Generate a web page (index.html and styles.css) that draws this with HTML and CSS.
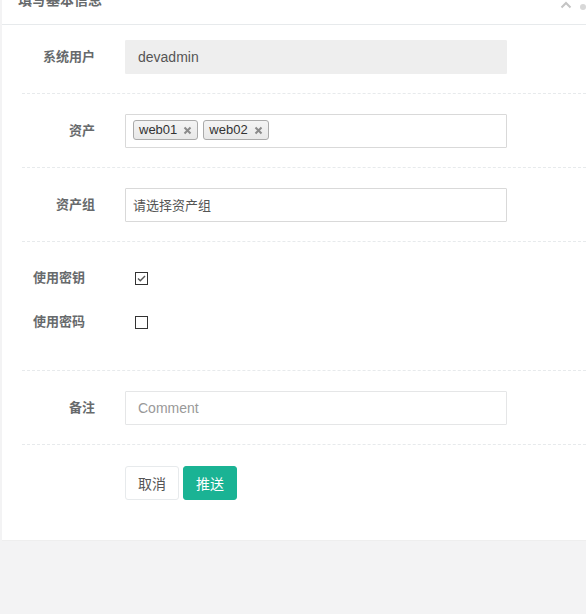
FILE: index.html
```html
<!DOCTYPE html>
<html lang="zh">
<head>
<meta charset="utf-8">
<title>填写基本信息</title>
<link rel="stylesheet" href="styles.css">
</head>
<body>
<div class="ibox">
  <div class="ibox-title">
    <h5>填写基本信息</h5>
    <div class="tools">
      <svg class="chev" width="12" height="8" viewBox="0 0 12 8"><path d="M1.5 6.5 L6 2 L10.5 6.5" fill="none" stroke="#c4c4c4" stroke-width="2"/></svg>
      <span class="wrench"></span>
    </div>
  </div>
  <div class="ibox-content">
    <div class="group">
      <label class="lbl">系统用户</label>
      <div class="ctl"><div class="input disabled">devadmin</div></div>
    </div>
    <div class="hr"></div>
    <div class="group">
      <label class="lbl">资产</label>
      <div class="ctl">
        <div class="input multi">
          <span class="tag">web01<svg class="x" width="9" height="9" viewBox="0 0 9 9"><path d="M1.5 1.5 L7.5 7.5 M7.5 1.5 L1.5 7.5" stroke="#8a8a8a" stroke-width="2"/></svg></span>
          <span class="tag">web02<svg class="x" width="9" height="9" viewBox="0 0 9 9"><path d="M1.5 1.5 L7.5 7.5 M7.5 1.5 L1.5 7.5" stroke="#8a8a8a" stroke-width="2"/></svg></span>
        </div>
      </div>
    </div>
    <div class="hr"></div>
    <div class="group">
      <label class="lbl">资产组</label>
      <div class="ctl"><div class="input select">请选择资产组</div></div>
    </div>
    <div class="hr"></div>
    <div class="checks">
      <div class="check-row">
        <label class="clbl">使用密钥</label>
        <svg class="cb" width="13" height="13" viewBox="0 0 13 13"><rect x="0.5" y="0.5" width="12" height="12" fill="#fff" stroke="#333"/><path d="M3 6.5 L5.3 8.8 L10 4" fill="none" stroke="#555" stroke-width="1.4"/></svg>
      </div>
      <div class="check-row">
        <label class="clbl">使用密码</label>
        <svg class="cb" width="13" height="13" viewBox="0 0 13 13"><rect x="0.5" y="0.5" width="12" height="12" fill="#fff" stroke="#333"/></svg>
      </div>
    </div>
    <div class="hr"></div>
    <div class="group">
      <label class="lbl">备注</label>
      <div class="ctl"><div class="input placeholder">Comment</div></div>
    </div>
    <div class="hr"></div>
    <div class="buttons">
      <button class="btn btn-white" type="button">取消</button>
      <button class="btn btn-primary" type="button">推送</button>
    </div>
  </div>
</div>
</body>
</html>
```

FILE: styles.css
```css
html, body {
  margin: 0;
  padding: 0;
  background: #f3f3f4;
  overflow: hidden;
  font-family: "Liberation Sans", "Noto Sans CJK SC", sans-serif;
  color: #676a6c;
}

.ibox {
  margin-top: -23px;
  margin-left: 2px;
  background: #fff;
  border-bottom: 1px solid #eeeeee;
}

.ibox-title {
  height: 48px;
  box-sizing: border-box;
  border-bottom: 1px solid #e7eaec;
  display: flex;
  align-items: flex-start;
  justify-content: space-between;
  padding: 0 0 0 16px;
}

.ibox-title h5 {
  margin: 0;
  padding-top: 14px;
  font-size: 14px;
  line-height: 17px;
  font-weight: bold;
  color: #676a6c;
  font-family: "Noto Sans CJK SC", sans-serif;
}

.tools {
  display: flex;
  align-items: center;
  gap: 8px;
  padding-top: 23px;
}

.chev { display: block; }

.wrench {
  display: block;
  width: 6px;
  height: 6px;
  margin-top: 4px;
  border-radius: 3px;
  background: #d8d8d8;
}

.ibox-content {
  padding: 15px 0 40px 20px;
}

.group {
  display: flex;
  align-items: center;
  height: 34px;
}

.lbl {
  width: 88px;
  box-sizing: border-box;
  padding-right: 15px;
  text-align: right;
  font-family: "Noto Sans CJK SC", sans-serif;
  font-size: 13px;
  font-weight: bold;
  color: #676a6c;
  margin-top: -3px;
}

.ctl {
  padding-left: 15px;
}

.input {
  width: 382px;
  height: 34px;
  box-sizing: border-box;
  border: 1px solid #e5e6e7;
  border-radius: 1px;
  padding: 0 12px;
  font-size: 14px;
  line-height: 32px;
  color: #555;
  background: #fff;
}

.input.disabled {
  background: #eeeeee;
  border-color: #eeeeee;
}

.input.select {
  padding-left: 7px;
  font-family: "Noto Sans CJK SC", sans-serif;
  font-size: 13px;
  color: #555;
  border-color: #d9d9d9;
}

.input.placeholder {
  color: #999;
}

.input.multi {
  height: 34px;
  padding: 5px 7px;
  display: flex;
  gap: 5px;
  border-color: #d9d9d9;
}

.tag {
  display: flex;
  align-items: center;
  height: 20px;
  box-sizing: border-box;
  padding: 0 5px 0 5px;
  border: 1px solid #aaa;
  border-radius: 3px;
  background: linear-gradient(#f4f4f4, #e8e8e8);
  font-size: 13px;
  line-height: 18px;
  color: #333;
}

.tag .x {
  margin-left: 6px;
  display: block;
}

.hr {
  border-top: 1px dashed #e7eaec;
  margin: 19px 0 20px 0;
}

.checks {
  display: flex;
  flex-direction: column;
  gap: 12px;
  margin-top: 0;
  margin-bottom: 32px;
}

.check-row {
  display: flex;
  align-items: center;
  height: 32px;
}

.clbl {
  width: 113px;
  box-sizing: border-box;
  padding-left: 11px;
  font-family: "Noto Sans CJK SC", sans-serif;
  font-size: 13px;
  font-weight: bold;
  color: #676a6c;
  margin-top: -3px;
}

.cb { display: block; }

.buttons {
  display: flex;
  gap: 4px;
  padding-left: 103px;
  padding-top: 1px;
}

.btn {
  width: 54px;
  height: 34px;
  box-sizing: border-box;
  border-radius: 3px;
  font-family: "Noto Sans CJK SC", sans-serif;
  font-size: 14px;
  padding: 0;
  cursor: pointer;
}

.btn-white {
  background: #fff;
  border: 1px solid #e7eaec;
  color: #555;
}

.btn-primary {
  background: #1ab394;
  border: 1px solid #1ab394;
  color: #fff;
}
```
